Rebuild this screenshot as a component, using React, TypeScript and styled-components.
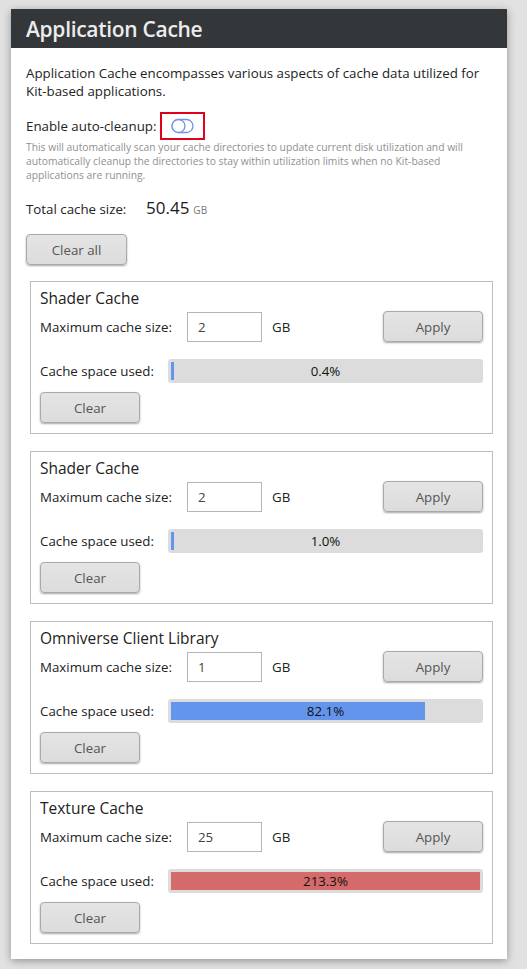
import React from 'react';
import styled, {createGlobalStyle} from 'styled-components';

const GlobalStyle = createGlobalStyle`
	body {
		margin: 0;
		background: #e1e1e1;
		font-family: 'Open Sans', 'Noto Sans', sans-serif;
		color: #222;
	}
`;

const Panel = styled.div`
	margin: 9px 20px 11px 11px;
	background: #fff;
	box-shadow: 0 2px 8px rgba(0, 0, 0, 0.35);
`;

const Header = styled.div`
	height: 39px;
	line-height: 40px;
	padding-left: 15px;
	background: #34373a;
	color: #ececec;
	font-size: 21px;
	font-weight: 600;
	letter-spacing: -0.3px;
`;

const Body = styled.div`
	padding: 16px 14px 15px 15px;
	font-size: 13.3px;
`;

const Intro = styled.p`
	margin: 0;
	line-height: 18px;
`;

const ToggleRow = styled.div`
	display: flex;
	align-items: center;
	margin-top: 12px;
	height: 28px;
`;

const ToggleFrame = styled.span`
	display: flex;
	align-items: center;
	justify-content: center;
	width: 41px;
	height: 24px;
	margin-left: 4px;
	border: 2px solid #e3001b;
`;

const Hint = styled.p`
	margin: 0;
	font-size: 10.3px;
	line-height: 14px;
	color: #909090;
`;

const TotalRow = styled.div`
	display: flex;
	align-items: baseline;
	margin-top: 14px;
`;

const TotalLabel = styled.span`
	width: 120px;
`;

const TotalValue = styled.span`
	font-size: 17px;
	font-weight: 500;
	color: #1a1a1a;
`;

const Unit = styled.span`
	margin-left: 4px;
	font-size: 10px;
	color: #777;
`;

const Button = styled.button<{$wide?: boolean}>`
	width: ${({$wide}) => ($wide ? '101px' : '100px')};
	height: 31px;
	padding: 0;
	border: 1px solid #a9a9a9;
	border-radius: 4px;
	background: linear-gradient(#e4e4e4, #dcdcdc);
	box-shadow: 0 1px 2px rgba(0, 0, 0, 0.35);
	font-family: inherit;
	font-size: 13.3px;
	color: #555;
`;

const ClearAll = styled(Button)`
	margin-top: 15px;
`;

const Section = styled.section`
	margin: 16px 0 0 4px;
	padding: 5px 9px 10px 9px;
	border: 1px solid #bdbdbd;
	& + & {
		margin-top: 17px;
	}
`;

const Title = styled.h3`
	margin: 0;
	font-size: 15.5px;
	font-weight: 400;
	line-height: 22px;
`;

const SizeRow = styled.div`
	display: flex;
	align-items: center;
	margin-top: 2px;
`;

const SizeLabel = styled.span`
	width: 147px;
`;

const SizeInput = styled.div`
	box-sizing: border-box;
	width: 75px;
	height: 30px;
	padding-left: 10px;
	border: 1px solid #b5b5b5;
	line-height: 28px;
	color: #444;
`;

const GbLabel = styled.span`
	margin-left: 10px;
`;

const Apply = styled(Button)`
	margin-left: auto;
`;

const UsageRow = styled.div`
	display: flex;
	align-items: center;
	margin-top: 17px;
`;

const UsageLabel = styled.span`
	width: 128px;
`;

const Track = styled.div`
	position: relative;
	flex: 1;
	height: 24px;
	padding: 3px;
	box-sizing: border-box;
	border-radius: 3px;
	background: #dcdcdc;
`;

const Fill = styled.div<{$over?: boolean}>`
	height: 100%;
	min-width: 3px;
	background: ${({$over}) => ($over ? '#d46a6a' : '#6495ed')};
`;

const Percent = styled.span`
	position: absolute;
	inset: 0;
	display: flex;
	align-items: center;
	justify-content: center;
	font-size: 13.3px;
	color: #111;
`;

const ClearButton = styled(Button)`
	margin-top: 9px;
`;

type Cache = {name: string; size: string; used: number};

const caches: Cache[] = [
	{name: 'Shader Cache', size: '2', used: 0.4},
	{name: 'Shader Cache', size: '2', used: 1.0},
	{name: 'Omniverse Client Library', size: '1', used: 82.1},
	{name: 'Texture Cache', size: '25', used: 213.3},
];

function ToggleIcon() {
	return (
		<svg width="23" height="16" viewBox="0 0 23 16">
			<rect x="1" y="1.5" width="21" height="13" rx="6.5" fill="none" stroke="#6e95e8" strokeWidth="1.3" />
			<circle cx="7.5" cy="8" r="6.5" fill="#fff" stroke="#6e95e8" strokeWidth="1.3" />
		</svg>
	);
}

function CacheSection({cache}: {cache: Cache}) {
	return (
		<Section>
			<Title>{cache.name}</Title>
			<SizeRow>
				<SizeLabel>Maximum cache size:</SizeLabel>
				<SizeInput>{cache.size}</SizeInput>
				<GbLabel>GB</GbLabel>
				<Apply>Apply</Apply>
			</SizeRow>
			<UsageRow>
				<UsageLabel>Cache space used:</UsageLabel>
				<Track>
					<Fill $over={cache.used > 100} style={{width: Math.min(cache.used, 100) + '%'}} />
					<Percent>{cache.used.toFixed(1)}%</Percent>
				</Track>
			</UsageRow>
			<ClearButton>Clear</ClearButton>
		</Section>
	);
}

export default function App() {
	return (
		<>
			<GlobalStyle />
			<Panel>
				<Header>Application Cache</Header>
				<Body>
					<Intro>
						Application Cache encompasses various aspects of cache data utilized for
						Kit-based applications.
					</Intro>
					<ToggleRow>
						Enable auto-cleanup:
						<ToggleFrame>
							<ToggleIcon />
						</ToggleFrame>
					</ToggleRow>
					<Hint>
						This will automatically scan your cache directories to update current disk utilization and will
						automatically cleanup the directories to stay within utilization limits when no Kit-based
						applications are running.
					</Hint>
					<TotalRow>
						<TotalLabel>Total cache size:</TotalLabel>
						<TotalValue>50.45</TotalValue>
						<Unit>GB</Unit>
					</TotalRow>
					<ClearAll $wide>Clear all</ClearAll>
					{caches.map((c, i) => (
						<CacheSection key={i} cache={c} />
					))}
				</Body>
			</Panel>
		</>
	);
}
